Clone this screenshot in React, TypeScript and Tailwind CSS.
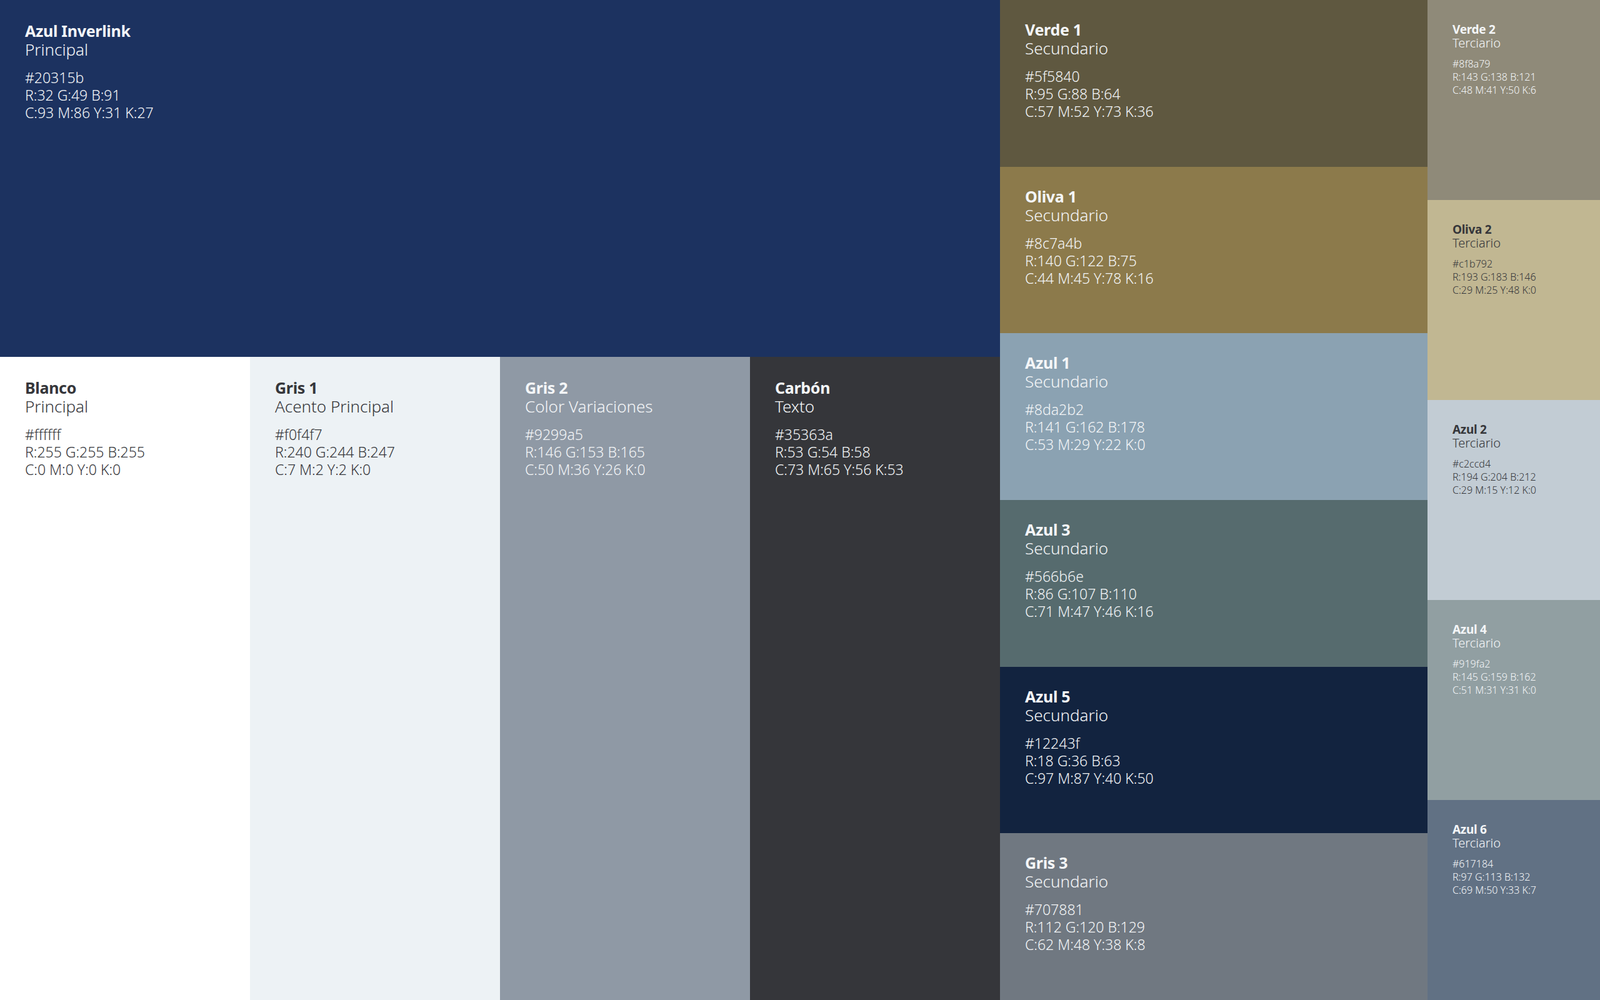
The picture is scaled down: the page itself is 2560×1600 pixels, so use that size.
type Swatch = {
  name: string
  role: string
  hex: string
  rgb: string
  cmyk: string
  dark?: boolean
}

const main: Swatch = { name: "Azul Inverlink", role: "Principal", hex: "#20315b", rgb: "R:32 G:49 B:91", cmyk: "C:93 M:86 Y:31 K:27" }

const bottom: (Swatch & { bg: string })[] = [
  { name: "Blanco", role: "Principal", hex: "#ffffff", rgb: "R:255 G:255 B:255", cmyk: "C:0 M:0 Y:0 K:0", dark: true, bg: "bg-[#ffffff]" },
  { name: "Gris 1", role: "Acento Principal", hex: "#f0f4f7", rgb: "R:240 G:244 B:247", cmyk: "C:7 M:2 Y:2 K:0", dark: true, bg: "bg-[#edf2f5]" },
  { name: "Gris 2", role: "Color Variaciones", hex: "#9299a5", rgb: "R:146 G:153 B:165", cmyk: "C:50 M:36 Y:26 K:0", bg: "bg-[#8f99a5]" },
  { name: "Carbón", role: "Texto", hex: "#35363a", rgb: "R:53 G:54 B:58", cmyk: "C:73 M:65 Y:56 K:53", bg: "bg-[#35363a]" },
]

const secondary: (Swatch & { bg: string })[] = [
  { name: "Verde 1", role: "Secundario", hex: "#5f5840", rgb: "R:95 G:88 B:64", cmyk: "C:57 M:52 Y:73 K:36", bg: "bg-[#5f5840]" },
  { name: "Oliva 1", role: "Secundario", hex: "#8c7a4b", rgb: "R:140 G:122 B:75", cmyk: "C:44 M:45 Y:78 K:16", bg: "bg-[#8c7a4b]" },
  { name: "Azul 1", role: "Secundario", hex: "#8da2b2", rgb: "R:141 G:162 B:178", cmyk: "C:53 M:29 Y:22 K:0", bg: "bg-[#8ba2b2]" },
  { name: "Azul 3", role: "Secundario", hex: "#566b6e", rgb: "R:86 G:107 B:110", cmyk: "C:71 M:47 Y:46 K:16", bg: "bg-[#566b6e]" },
  { name: "Azul 5", role: "Secundario", hex: "#12243f", rgb: "R:18 G:36 B:63", cmyk: "C:97 M:87 Y:40 K:50", bg: "bg-[#12233f]" },
  { name: "Gris 3", role: "Secundario", hex: "#707881", rgb: "R:112 G:120 B:129", cmyk: "C:62 M:48 Y:38 K:8", bg: "bg-[#707881]" },
]

const tertiary: (Swatch & { bg: string })[] = [
  { name: "Verde 2", role: "Terciario", hex: "#8f8a79", rgb: "R:143 G:138 B:121", cmyk: "C:48 M:41 Y:50 K:6", bg: "bg-[#8f8a79]" },
  { name: "Oliva 2", role: "Terciario", hex: "#c1b792", rgb: "R:193 G:183 B:146", cmyk: "C:29 M:25 Y:48 K:0", dark: true, bg: "bg-[#c1b792]" },
  { name: "Azul 2", role: "Terciario", hex: "#c2ccd4", rgb: "R:194 G:204 B:212", cmyk: "C:29 M:15 Y:12 K:0", dark: true, bg: "bg-[#c2ccd4]" },
  { name: "Azul 4", role: "Terciario", hex: "#919fa2", rgb: "R:145 G:159 B:162", cmyk: "C:51 M:31 Y:31 K:0", bg: "bg-[#919fa2]" },
  { name: "Azul 6", role: "Terciario", hex: "#617184", rgb: "R:97 G:113 B:132", cmyk: "C:69 M:50 Y:33 K:7", bg: "bg-[#617184]" },
]

const serif = "font-['Merriweather','DejaVu_Serif',serif]"

function Label({ s, small }: { s: Swatch; small?: boolean }) {
  const color = s.dark ? "text-[#35363a]" : "text-[#f4f6f8]"
  if (small) {
    return (
      <div className={`${color} font-['Roboto',sans-serif] font-light`}>
        <div className={`${serif} text-[19px] font-bold leading-[22px] tracking-[-0.3px]`}>{s.name}</div>
        <div className="text-[20px] leading-[22px]">{s.role}</div>
        <div className="mt-[12px] text-[16px] leading-[21px]">
          <div>{s.hex}</div>
          <div>{s.rgb}</div>
          <div>{s.cmyk}</div>
        </div>
      </div>
    )
  }
  return (
    <div className={`${color} font-['Roboto',sans-serif] font-light`}>
      <div className={`${serif} text-[25px] font-bold leading-[30px] tracking-[-0.3px]`}>{s.name}</div>
      <div className="text-[26px] leading-[30px]">{s.role}</div>
      <div className="mt-[16px] text-[23px] leading-[28px]">
        <div>{s.hex}</div>
        <div>{s.rgb}</div>
        <div>{s.cmyk}</div>
      </div>
    </div>
  )
}

export default function App() {
  return (
    <div className="flex h-[1600px] w-[2560px] overflow-hidden">
      <div className="flex w-[1600px] flex-col">
        <div className="h-[571px] bg-[#1c3260] px-[40px] pt-[34px]">
          <Label s={main} />
        </div>
        <div className="grid flex-1 grid-cols-4">
          {bottom.map((s) => (
            <div key={s.name} className={`${s.bg} px-[40px] pt-[34px]`}>
              <Label s={s} />
            </div>
          ))}
        </div>
      </div>
      <div className="grid w-[684px] grid-rows-6">
        {secondary.map((s) => (
          <div key={s.name} className={`${s.bg} px-[40px] pt-[32px]`}>
            <Label s={s} />
          </div>
        ))}
      </div>
      <div className="grid w-[276px] grid-rows-5">
        {tertiary.map((s) => (
          <div key={s.name} className={`${s.bg} px-[40px] pt-[36px]`}>
            <Label s={s} small />
          </div>
        ))}
      </div>
    </div>
  )
}
